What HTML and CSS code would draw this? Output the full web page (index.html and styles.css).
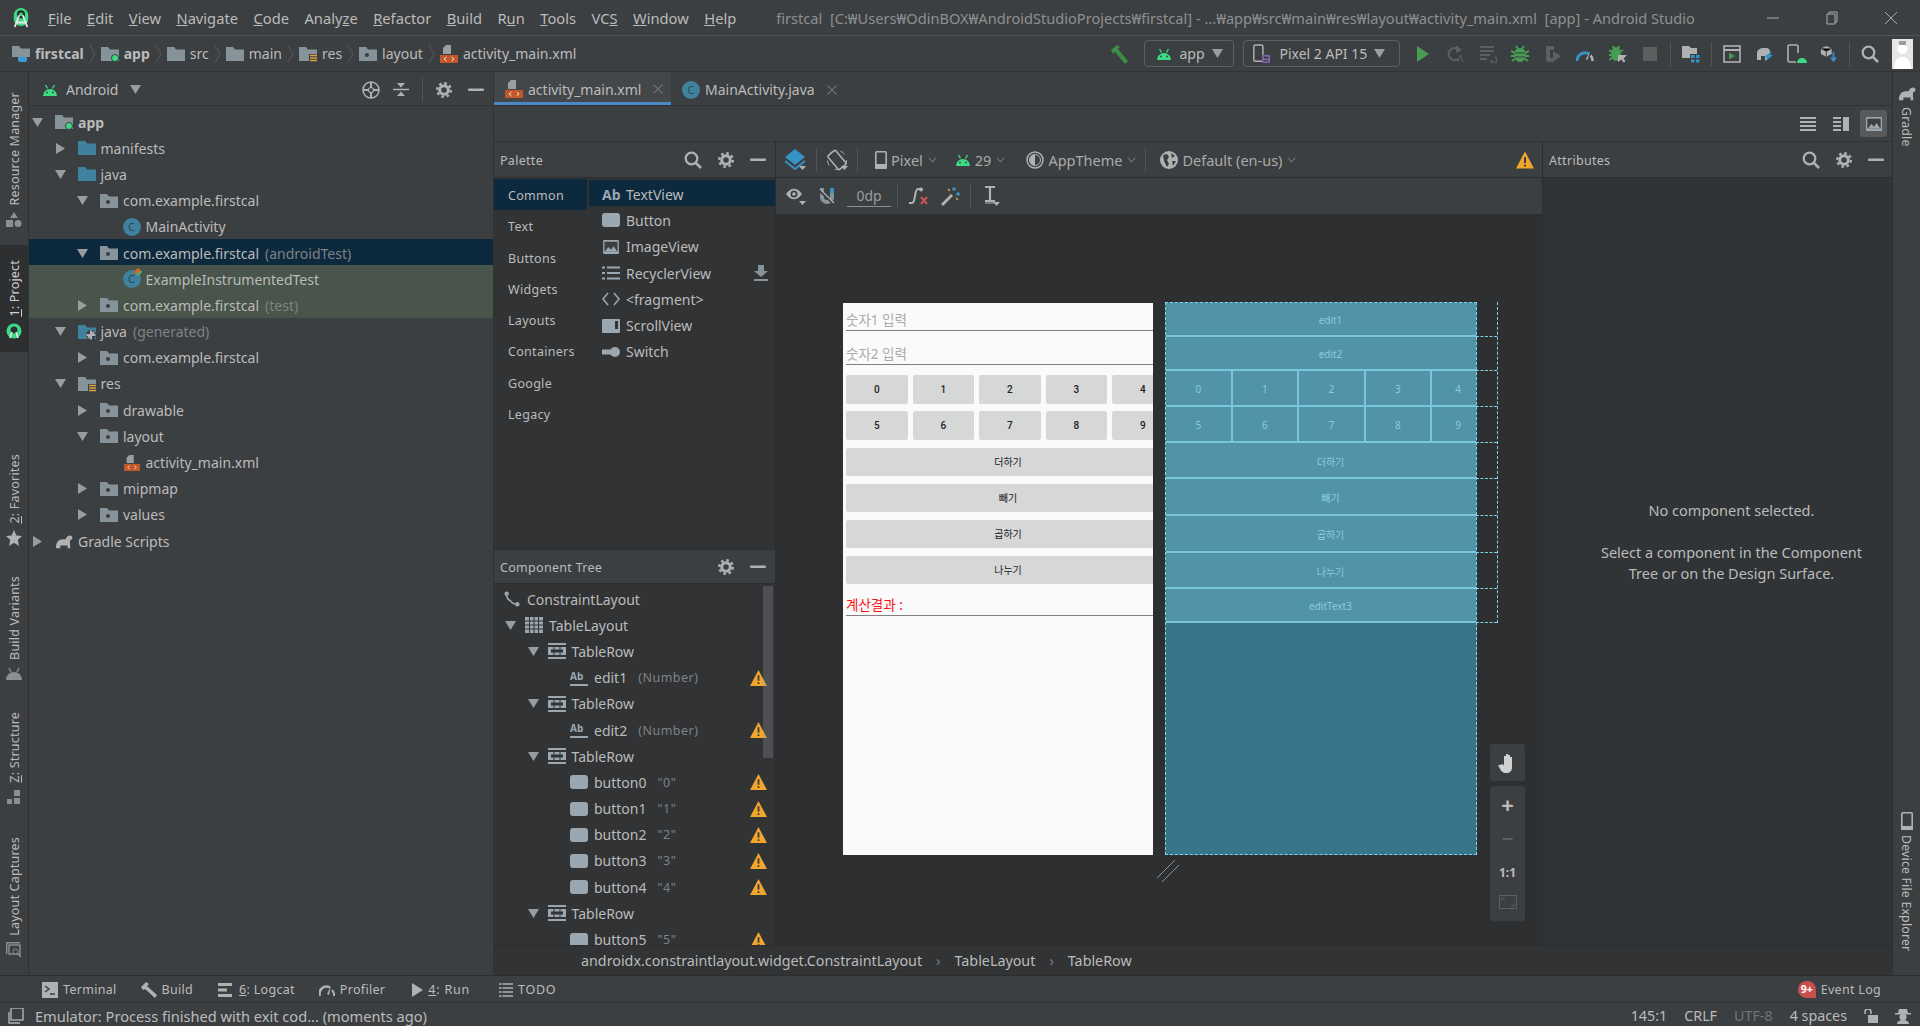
FILE: index.html
```html
<!DOCTYPE html>
<html lang="en">
<head>
    <meta charset="UTF-8">
    <meta name="viewport" content="width=device-width, initial-scale=1.0">
    <title>activity_main.xml - Android Studio</title>
    <link rel="stylesheet" href="styles.css">
</head>
<body>
    <svg class="sprite" xmlns="http://www.w3.org/2000/svg">
        <symbol id="i-logo" viewBox="0 0 20 24"><path d="M10 1a8 8 0 0 1 8 8v4a8 8 0 0 1-16 0V9a8 8 0 0 1 8-8z" fill="#3ddc84"/><circle cx="10" cy="8" r="4.5" fill="#2b2d2f"/><circle cx="10" cy="8" r="2" fill="#3ddc84"/><path d="M8 9 3 22M12 9l5 13M4 17h12" stroke="#e8e8e8" stroke-width="2" fill="none"/></symbol>
        <symbol id="i-folder" viewBox="0 0 18 16"><path d="M0 1h7l2 2.500h9V15H0z" fill="#87939a"/></symbol>
        <symbol id="i-pkg" viewBox="0 0 18 16"><path d="M0 1h7l2 2.500h9V15H0z" fill="#87939a"/><circle cx="8" cy="9" r="2" fill="#3c3f41"/></symbol>
        <symbol id="i-src" viewBox="0 0 18 16"><path d="M0 1h7l2 2.500h9V15H0z" fill="#40829e"/></symbol>
        <symbol id="i-gen" viewBox="0 0 18 16"><path d="M0 1h7l2 2.500h9V15H0z" fill="#40829e"/><circle cx="13" cy="11" r="5" fill="#3c3f41"/><path d="M13 11V6.500M13 11l4.500 0M13 11v4.500M13 11H8.500M13 11l3-3M13 11l-3 3" stroke="#afb1b3" stroke-width="2"/></symbol>
        <symbol id="i-module" viewBox="0 0 18 16"><path d="M0 1h7l2 2.500h9V15H0z" fill="#87939a"/><circle cx="14" cy="12" r="3.500" fill="#3ddc84" stroke="#3c3f41"/></symbol>
        <symbol id="i-project" viewBox="0 0 18 18"><path d="M0 1h7l2 2.500h9V12H0z" fill="#87939a"/><path d="M6 12h9v3a2 2 0 0 1-2 2H8a2 2 0 0 1-2-2z" fill="#3b9ad9"/></symbol>
        <symbol id="i-res" viewBox="0 0 18 16"><path d="M0 1h7l2 2.500h9V15H0z" fill="#87939a"/><rect x="10" y="8" width="8" height="8" fill="#3c3f41"/><path d="M11 9.500h7M11 12h7M11 14.500h7" stroke="#d9a343" stroke-width="1.500"/></symbol>
        <symbol id="i-xml" viewBox="0 0 18 18"><path d="M6 0h5v9H3V3z" fill="#9a9ea1"/><rect x="0" y="10" width="18" height="8" fill="#c2582a"/><path d="M6.500 12 4 14l2.500 2M11.500 12l2.500 2-2.500 2" stroke="#f0d8c8" fill="none"/></symbol>
        <symbol id="i-android" viewBox="0 0 16 12"><path d="M1 12a7 7 0 0 1 14 0z" fill="#3ddc84"/><path d="M3.500 1l2 3.500M12.500 1l-2 3.500" stroke="#3ddc84" stroke-width="1.300"/><circle cx="5" cy="8.500" r=".9" fill="#3c3f41"/><circle cx="11" cy="8.500" r=".9" fill="#3c3f41"/></symbol>
        <symbol id="i-down" viewBox="0 0 11 11"><path d="M0 1h11L5.500 10z" fill="#9a9da0"/></symbol>
        <symbol id="i-right" viewBox="0 0 11 11"><path d="M1 0l9 5.500L1 11z" fill="#9a9da0"/></symbol>
        <symbol id="i-chev" viewBox="0 0 10 8"><path d="M1 1.500 5 6l4-4.500" stroke="#7c7f82" stroke-width="1.200" fill="none"/></symbol>
        <symbol id="i-crumb" viewBox="0 0 8 22"><path d="M1 1l6 10-6 10" stroke="#5a5d5f" fill="none"/></symbol>
        <symbol id="i-gear" viewBox="0 0 16 16"><circle cx="8" cy="8" r="4.300" fill="none" stroke="#afb1b3" stroke-width="3"/><circle cx="8" cy="8" r="6.800" fill="none" stroke="#afb1b3" stroke-width="2.400" stroke-dasharray="2.700 2.640"/></symbol>
        <symbol id="i-minus" viewBox="0 0 16 16"><rect x="0" y="6.500" width="16" height="2.500" rx="1" fill="#afb1b3"/></symbol>
        <symbol id="i-search" viewBox="0 0 18 18"><circle cx="7.500" cy="7.500" r="5.800" fill="none" stroke="#afb1b3" stroke-width="2.200"/><path d="M11.500 11.500 17 17" stroke="#afb1b3" stroke-width="2.500"/></symbol>
        <symbol id="i-locate" viewBox="0 0 18 18"><circle cx="9" cy="9" r="8" fill="none" stroke="#afb1b3" stroke-width="1.500"/><circle cx="9" cy="9" r="2.500" fill="none" stroke="#afb1b3" stroke-width="1.200"/><path d="M9 1v5M9 12v5M1 9h5M12 9h5" stroke="#afb1b3" stroke-width="2"/></symbol>
        <symbol id="i-collapse" viewBox="0 0 16 16"><path d="M0 7.500h16" stroke="#afb1b3" stroke-width="1.500"/><path d="M4 1h8L8 5.500zM4 14h8l-4-4.500z" fill="#afb1b3"/></symbol>
        <symbol id="i-close" viewBox="0 0 10 10"><path d="M.5.500l9 9M9.500.500l-9 9" stroke="#6e7174" stroke-width="1.100"/></symbol>
        <symbol id="i-hammer" viewBox="0 0 20 20"><path d="M2 6 8 1l3 2-2 2 10 12-3 3L6 8 4 10z" fill="#3d8c46"/></symbol>
        <symbol id="i-device" viewBox="0 0 20 22"><rect x="1" y="1" width="10" height="18" rx="1.500" fill="none" stroke="#afb1b3" stroke-width="1.600"/><rect x="10" y="12" width="9" height="9" fill="#3c3f41"/><rect x="11" y="13" width="7" height="7" fill="none" stroke="#8a6db5" stroke-width="1.500"/><path d="M11 17h7" stroke="#8a6db5" stroke-width="1.500"/></symbol>
        <symbol id="i-run" viewBox="0 0 16 16"><path d="M2 0l12 8-12 8z" fill="#499c54"/></symbol>
        <symbol id="i-rerun" viewBox="0 0 18 18"><path d="M13 5a6 6 0 1 0-1 9" fill="none" stroke="#5e6060" stroke-width="2"/><path d="M10 0l6 5-6 3z" fill="#5e6060"/><path d="M12 17l2.500-7 2.500 7" fill="none" stroke="#5e6060"/></symbol>
        <symbol id="i-apply" viewBox="0 0 18 18"><path d="M1 2h14M1 6h14M1 10h10M1 14h7" stroke="#5e6060" stroke-width="2.200"/><path d="M16 12a3 3 0 1 1-4 3" fill="none" stroke="#5e6060" stroke-width="1.400"/></symbol>
        <symbol id="i-bug" viewBox="0 0 18 18"><ellipse cx="9" cy="10" rx="6" ry="7" fill="#499c54"/><path d="M5 1l2 3M13 1l-2 3M0 6l4 2M18 6l-4 2M0 11h4M18 11h-4M1 16l3-2M17 16l-3-2" stroke="#499c54" stroke-width="2"/><path d="M4 8h10M4 12h10" stroke="#3c3f41"/></symbol>
        <symbol id="i-attach" viewBox="0 0 18 18"><path d="M2 1h8v4H6v8h4v4H4l-2-2z" fill="#5e6060"/><path d="M9 6l8 5-8 6z" fill="#5e6060"/></symbol>
        <symbol id="i-profiler" viewBox="0 0 18 16"><path d="M1 15a8 8 0 0 1 12-7" fill="none" stroke="#3592c4" stroke-width="3"/><path d="M14 5l-4 8 1.500 1z" fill="#afb1b3"/><path d="M14.500 9.500a7 7 0 0 1 2 5.500" fill="none" stroke="#afb1b3" stroke-width="2.500"/></symbol>
        <symbol id="i-bug-attach" viewBox="0 0 18 18"><ellipse cx="7" cy="9" rx="5" ry="7" fill="#499c54"/><path d="M0 5l3 2M0 10h3M0 15l3-2M14 5l-3 2M4 1l1 3M10 1L9 4" stroke="#499c54" stroke-width="2"/><path d="M9 10h9l-3.500 3.500 2 3-2 1-2-3L9 17z" fill="#afb1b3"/></symbol>
        <symbol id="i-stop" viewBox="0 0 16 16"><rect x="1" y="1" width="14" height="14" fill="#5e6060"/></symbol>
        <symbol id="i-struct" viewBox="0 0 18 18"><path d="M0 1h7l2 2h6v10H0z" fill="#afb1b3"/><rect x="8" y="9" width="10" height="9" fill="#3c3f41"/><path d="M9 10h3.500v3H9zM14 10h3.500v3H14zM9 14.500h3.500v3H9zM14 14.500h3.500v3H14z" fill="#3592c4"/></symbol>
        <symbol id="i-panel" viewBox="0 0 18 18"><rect x="1" y="1" width="16" height="16" fill="none" stroke="#afb1b3" stroke-width="1.600"/><path d="M1 5h16" stroke="#afb1b3" stroke-width="2"/><path d="M6 7.500l6 3.500-6 3.500z" fill="#499c54"/></symbol>
        <symbol id="i-sync" viewBox="0 0 20 18"><path d="M3 15V8c0-3 3-5 7-5h2c3 0 4 2 4 4v3h-3v5h-2v-4H7v4z" fill="#afb1b3"/><path d="M10 12l8-6-2 4h3l-8 7 2-5z" fill="#3592c4"/></symbol>
        <symbol id="i-avd" viewBox="0 0 20 20"><rect x="1" y="1" width="10" height="17" rx="1.500" fill="none" stroke="#afb1b3" stroke-width="1.600"/><rect x="9" y="9" width="11" height="11" fill="#3c3f41"/><path d="M10 19a5 5 0 0 1 10 0z" fill="#3ddc84"/></symbol>
        <symbol id="i-sdk" viewBox="0 0 18 20"><path d="M6 1l6 3v6l-6 3-6-3V4z" fill="#afb1b3"/><path d="M6 7v6M0 4l6 3 6-3" stroke="#3c3f41"/><path d="M14 8v9" stroke="#3592c4" stroke-width="2"/><path d="M10 14h8l-4 5z" fill="#3592c4"/></symbol>
        <symbol id="i-avatar" viewBox="0 0 21 30"><rect width="21" height="30" fill="#e6e6e6"/><circle cx="10.500" cy="10" r="5" fill="#fff"/><path d="M2 30c0-9 4-12 8.500-12S19 21 19 30z" fill="#fff"/><path d="M7 2h7v4H7z" fill="#9c9c9c"/></symbol>
        <symbol id="i-list" viewBox="0 0 16 16"><path d="M0 2h16M0 6h16M0 10h16M0 14h16" stroke="#afb1b3" stroke-width="2"/></symbol>
        <symbol id="i-split" viewBox="0 0 16 16"><path d="M0 2h8M0 6h8M0 10h8M0 14h8" stroke="#afb1b3" stroke-width="2"/><rect x="10" y="1" width="6" height="14" fill="#afb1b3"/></symbol>
        <symbol id="i-image" viewBox="0 0 18 16"><rect width="18" height="16" rx="1" fill="#9aa7b0"/><rect x="1.500" y="2" width="15" height="11" fill="#3c3f41"/><path d="M2 13l4-5 3 3 3-4 4 6z" fill="#9aa7b0"/></symbol>
        <symbol id="i-layers" viewBox="0 0 22 22"><path d="M11 0l10 8-10 8L1 8z" fill="#3592c4"/><path d="M1 12l10 8 10-8" fill="none" stroke="#3592c4" stroke-width="2"/><path d="M15 17h7l-3.500 4z" fill="#afb1b3"/></symbol>
        <symbol id="i-rotate" viewBox="0 0 22 22"><rect x="6" y="2" width="10" height="18" rx="1.500" transform="rotate(-40 11 11)" fill="none" stroke="#afb1b3" stroke-width="1.500"/><circle cx="11" cy="11" r="9.500" fill="none" stroke="#afb1b3" stroke-dasharray="5 7"/><path d="M15 17h7l-3.500 4z" fill="#afb1b3"/></symbol>
        <symbol id="i-phone" viewBox="0 0 12 18"><rect x=".8" y=".8" width="10.400" height="16.400" rx="1" fill="none" stroke="#afb1b3" stroke-width="1.600"/><rect x="0" y="13" width="12" height="5" rx="1" fill="#afb1b3"/></symbol>
        <symbol id="i-theme" viewBox="0 0 18 18"><circle cx="9" cy="9" r="8" fill="none" stroke="#afb1b3" stroke-width="1.500"/><path d="M9 3.500a5.500 5.500 0 0 0 0 11z" fill="#afb1b3"/><circle cx="9" cy="9" r="5.500" fill="none" stroke="#afb1b3"/></symbol>
        <symbol id="i-globe" viewBox="0 0 18 18"><circle cx="9" cy="9" r="9" fill="#afb1b3"/><path d="M3 4l4-1 2 3-2 3 2 4-2 3-3-6zM11 2l4 3-3 2zM12 10h4l-3 5z" fill="#3c3f41"/></symbol>
        <symbol id="i-warn" viewBox="0 0 18 17"><path d="M9 0l9 17H0z" fill="#f2a62c"/><path d="M9 5.500v6M9 13v2" stroke="#3c3f41" stroke-width="2"/></symbol>
        <symbol id="i-eye" viewBox="0 0 20 20"><path d="M0 8c5-7 11-7 16 0-5 7-11 7-16 0z" fill="#afb1b3"/><circle cx="8" cy="8" r="3.500" fill="#3c3f41"/><circle cx="8" cy="8" r="1.800" fill="#afb1b3"/><path d="M13 15h7l-3.500 4z" fill="#afb1b3"/></symbol>
        <symbol id="i-magnet" viewBox="0 0 18 18"><path d="M1 1v9a7 7 0 0 0 14 0V1h-4v9a3 3 0 0 1-6 0V1z" fill="#87939a"/><rect x="11" y="1" width="4" height="5" fill="#3592c4"/><path d="M0 3l15 14" stroke="#3c3f41" stroke-width="2.500"/><path d="M1 2l14 14" stroke="#afb1b3" stroke-width="1.200"/></symbol>
        <symbol id="i-noconstraint" viewBox="0 0 20 18"><path d="M1 16h3c4 0 2-14 6-14h2" fill="none" stroke="#afb1b3" stroke-width="2"/><circle cx="13" cy="2.500" r="2" fill="#afb1b3"/><path d="M13 10l6 7M19 10l-6 7" stroke="#c75450" stroke-width="2"/></symbol>
        <symbol id="i-wand" viewBox="0 0 20 20"><path d="M1 18 11 8l2 2L3 20z" fill="#afb1b3"/><path d="M14 1v4M12 3h4M18 6v4M16 8h4" stroke="#3592c4" stroke-width="1.400"/><path d="M8 3l2 2M16 12l2 2" stroke="#d9a343" stroke-width="1.400"/></symbol>
        <symbol id="i-baseline" viewBox="0 0 18 20"><path d="M3 1h10M3 15h10M8 1v14" stroke="#afb1b3" stroke-width="2.200"/><path d="M3 17h9" stroke="#afb1b3"/><path d="M11 16h7l-3.500 4z" fill="#afb1b3"/></symbol>
        <symbol id="i-hand" viewBox="0 0 18 20"><path d="M1 12l3-1 1 2V3h2v7V1h2v9-8h2v8V4h2v10c0 4-2 6-6 6-4 0-5-2-8-8z" fill="#d0d0d0"/></symbol>
        <symbol id="i-fit" viewBox="0 0 18 14"><rect x=".5" y=".5" width="17" height="13" fill="none" stroke="#5e6062"/><path d="M3 6V3h3M15 8v3h-3" fill="none" stroke="#5e6062"/></symbol>
        <symbol id="i-button" viewBox="0 0 18 14"><rect width="18" height="14" rx="3" fill="#9aa7b0"/></symbol>
        <symbol id="i-rlist" viewBox="0 0 18 14"><path d="M0 1.500h3M5 1.500h13M0 7h3M5 7h13M0 12.500h3M5 12.500h13" stroke="#9aa7b0" stroke-width="2"/></symbol>
        <symbol id="i-code" viewBox="0 0 18 14"><path d="M6 1 1 7l5 6M12 1l5 6-5 6" fill="none" stroke="#9aa7b0" stroke-width="1.600"/></symbol>
        <symbol id="i-scroll" viewBox="0 0 18 14"><rect width="18" height="14" rx="1" fill="#9aa7b0"/><rect x="13" y="2" width="3" height="8" fill="#313335"/></symbol>
        <symbol id="i-switch" viewBox="0 0 18 12"><rect x="0" y="3.500" width="12" height="5" fill="#9aa7b0"/><circle cx="13" cy="6" r="5" fill="#9aa7b0"/></symbol>
        <symbol id="i-download" viewBox="0 0 14 16"><path d="M4 0h6v6h4l-7 6-7-6h4z" fill="#87939a"/><rect y="14" width="14" height="2" fill="#87939a"/></symbol>
        <symbol id="i-constraint" viewBox="0 0 18 18"><circle cx="3" cy="3" r="2.500" fill="#9aa7b0"/><circle cx="15" cy="15" r="2.500" fill="#9aa7b0"/><path d="M3 3c0 8 3 6 5 9s4 3 7 3" fill="none" stroke="#9aa7b0" stroke-width="1.800"/></symbol>
        <symbol id="i-table" viewBox="0 0 18 16"><path d="M0 0h18v16H0z" fill="#9aa7b0"/><path d="M0 4h18M0 8h18M0 12h18M4.500 0v16M9 0v16M13.500 0v16" stroke="#313335"/></symbol>
        <symbol id="i-tablerow" viewBox="0 0 18 16"><path d="M0 0h18v2H0zM0 14h18v2H0z" fill="#9aa7b0"/><rect x="0" y="4" width="18" height="8" fill="#9aa7b0"/><path d="M6 4v8M12 4v8" stroke="#313335"/><rect x="3" y="6.500" width="12" height="3" fill="#313335"/></symbol>
        <symbol id="i-gradle" viewBox="0 0 20 16"><path d="M1 16c0-7 3-10 8-10h3c1-4 5-5 7-3 1 2 0 4-2 4-1 2 0 6 0 9h-3v-3H6v3z" fill="#afb1b3"/></symbol>
        <symbol id="i-resmgr" viewBox="0 0 16 16"><path d="M8 0l4 6H4zM0 8h7v7H0z" fill="#8c8f92"/><circle cx="12" cy="11.500" r="3.500" fill="#8c8f92"/></symbol>
        <symbol id="i-droid" viewBox="0 0 16 16"><circle cx="8" cy="8" r="7.500" fill="#3ddc84"/><circle cx="8" cy="7" r="3.500" fill="#2d2f31"/><path d="M6 9l-2 6M10 9l2 6" stroke="#e8e8e8" stroke-width="1.500"/></symbol>
        <symbol id="i-star" viewBox="0 0 16 16"><path d="M8 0l2.400 5.500 5.600.500-4.200 3.800L13 16 8 12.800 3 16l1.200-6.200L0 6l5.600-.500z" fill="#afb1b3"/></symbol>
        <symbol id="i-variants" viewBox="0 0 16 14"><path d="M0 13a8 8 0 0 1 16 0z" fill="#8c8f92"/><path d="M3 1l2 4M13 1l-2 4" stroke="#8c8f92" stroke-width="1.400"/></symbol>
        <symbol id="i-structure" viewBox="0 0 16 16"><path d="M8 1h6v6H8zM1 10h5v5H1zM8 9h6v6H8z" fill="#8c8f92"/></symbol>
        <symbol id="i-capture" viewBox="0 0 16 16"><path d="M.7 12V.7H14" fill="none" stroke="#8c8f92" stroke-width="1.400"/><rect x="3" y="3" width="11" height="9" fill="#3c3f41" stroke="#8c8f92" stroke-width="1.400"/><circle cx="9.500" cy="9.500" r="2.500" fill="#3c3f41" stroke="#8c8f92"/><path d="M11.500 11.500l3.500 3.500" stroke="#8c8f92" stroke-width="1.500"/></symbol>
        <symbol id="i-terminal" viewBox="0 0 16 16"><rect width="16" height="16" fill="#afb1b3"/><path d="M3 4l4 3-4 3" fill="none" stroke="#3c3f41" stroke-width="1.500"/><path d="M8 12h5" stroke="#3c3f41" stroke-width="1.500"/></symbol>
        <symbol id="i-build" viewBox="0 0 16 16"><path d="M0 5l5-5 3 2-2 2 10 9-2 3L4 7 2 8z" fill="#afb1b3"/></symbol>
        <symbol id="i-logcat" viewBox="0 0 16 14"><path d="M0 0h14v3H0zM0 5.500h9v3H0zM0 11h14v3H0z" fill="#afb1b3"/></symbol>
        <symbol id="i-gauge" viewBox="0 0 16 14"><path d="M1 13A7 7 0 0 1 11 4.500" fill="none" stroke="#afb1b3" stroke-width="2.500"/><path d="M12 3L8 11l2 1z" fill="#afb1b3"/><path d="M13 7a7 7 0 0 1 2 6" fill="none" stroke="#afb1b3" stroke-width="2"/></symbol>
        <symbol id="i-play" viewBox="0 0 11 14"><path d="M0 0l11 7-11 7z" fill="#afb1b3"/></symbol>
        <symbol id="i-todo" viewBox="0 0 14 14"><path d="M0 1h14M0 5h14M0 9h14M0 13h14" stroke="#afb1b3" stroke-width="1.600"/><path d="M3 0v14" stroke="#3c3f41"/></symbol>
        <symbol id="i-copies" viewBox="0 0 16 16"><rect x="3" y="0" width="12" height="12" fill="none" stroke="#afb1b3" stroke-width="1.400"/><path d="M1 4v11h11" fill="none" stroke="#afb1b3" stroke-width="1.400"/></symbol>
        <symbol id="i-lock" viewBox="0 0 14 14"><path d="M1 5V3a3 3 0 0 1 6 0v2" fill="none" stroke="#afb1b3" stroke-width="1.600"/><rect x="4" y="6" width="10" height="8" fill="#afb1b3"/></symbol>
        <symbol id="i-hector" viewBox="0 0 16 16"><path d="M4 1h8l1 4h3v1.500H0V5h3z" fill="#afb1b3"/><circle cx="8" cy="9" r="3.500" fill="#afb1b3"/><path d="M2 16c0-3 3-4 6-4s6 1 6 4z" fill="#afb1b3"/></symbol>
        <symbol id="i-devphone" viewBox="0 0 12 18"><rect x=".8" y=".8" width="10.400" height="16.400" rx="1" fill="none" stroke="#afb1b3" stroke-width="1.600"/><rect x="0" y="14" width="12" height="4" fill="#afb1b3"/></symbol>
    </svg>

    <header class="titlebar">
        <svg class="logo"><use href="#i-logo"/></svg>
        <nav class="menu">
            <span><u>F</u>ile</span>
            <span><u>E</u>dit</span>
            <span><u>V</u>iew</span>
            <span><u>N</u>avigate</span>
            <span><u>C</u>ode</span>
            <span>Analy<u>z</u>e</span>
            <span><u>R</u>efactor</span>
            <span><u>B</u>uild</span>
            <span>R<u>u</u>n</span>
            <span><u>T</u>ools</span>
            <span>VC<u>S</u></span>
            <span><u>W</u>indow</span>
            <span><u>H</u>elp</span>
        </nav>
        <div class="window-title">firstcal&nbsp; [C:₩Users₩OdinBOX₩AndroidStudioProjects₩firstcal] - ...₩app₩src₩main₩res₩layout₩activity_main.xml&nbsp; [app] - Android Studio</div>
        <div class="window-btns">
            <svg class="win-ic" viewBox="0 0 14 14"><path d="M1 7h12" stroke="#a9abad"/></svg>
            <svg class="win-ic" viewBox="0 0 14 14"><path d="M4 3V1h8v10h-2M2 3h8v10H2z" fill="none" stroke="#a9abad"/></svg>
            <svg class="win-ic" viewBox="0 0 14 14"><path d="M1 1l12 12M13 1 1 13" stroke="#a9abad"/></svg>
        </div>
    </header>

    <div class="navbar">
        <div class="crumbs">
            <svg class="ic-18"><use href="#i-project"/></svg><b>firstcal</b><svg class="crumb-sep"><use href="#i-crumb"/></svg>
            <svg class="ic-18"><use href="#i-module"/></svg><b>app</b><svg class="crumb-sep"><use href="#i-crumb"/></svg>
            <svg class="ic-18"><use href="#i-folder"/></svg><span>src</span><svg class="crumb-sep"><use href="#i-crumb"/></svg>
            <svg class="ic-18"><use href="#i-folder"/></svg><span>main</span><svg class="crumb-sep"><use href="#i-crumb"/></svg>
            <svg class="ic-18"><use href="#i-res"/></svg><span>res</span><svg class="crumb-sep"><use href="#i-crumb"/></svg>
            <svg class="ic-18"><use href="#i-pkg"/></svg><span>layout</span><svg class="crumb-sep"><use href="#i-crumb"/></svg>
            <svg class="ic-18"><use href="#i-xml"/></svg><span>activity_main.xml</span>
        </div>
        <div class="actions">
            <svg class="ic-20"><use href="#i-hammer"/></svg>
            <div class="combo combo-app"><svg class="ic-android"><use href="#i-android"/></svg><span>app</span><svg class="ic-11"><use href="#i-down"/></svg></div>
            <div class="combo combo-device"><svg class="ic-20"><use href="#i-device"/></svg><span>Pixel 2 API 15</span><svg class="ic-11"><use href="#i-down"/></svg></div>
            <div class="tool-icons">
                <span class="tb"><svg class="ic-16"><use href="#i-run"/></svg></span>
                <span class="tb"><svg class="ic-18"><use href="#i-rerun"/></svg></span>
                <span class="tb"><svg class="ic-18"><use href="#i-apply"/></svg></span>
                <span class="tb"><svg class="ic-18"><use href="#i-bug"/></svg></span>
                <span class="tb"><svg class="ic-18"><use href="#i-attach"/></svg></span>
                <span class="tb"><svg class="ic-18"><use href="#i-profiler"/></svg></span>
                <span class="tb"><svg class="ic-18"><use href="#i-bug-attach"/></svg></span>
                <span class="tb"><svg class="ic-16"><use href="#i-stop"/></svg></span>
                <i class="vsep"></i>
                <span class="tb"><svg class="ic-18"><use href="#i-struct"/></svg></span>
                <i class="vsep"></i>
                <span class="tb"><svg class="ic-18"><use href="#i-panel"/></svg></span>
                <span class="tb"><svg class="ic-20"><use href="#i-sync"/></svg></span>
                <span class="tb"><svg class="ic-20"><use href="#i-avd"/></svg></span>
                <span class="tb"><svg class="ic-18"><use href="#i-sdk"/></svg></span>
                <i class="vsep"></i>
                <span class="tb"><svg class="ic-18"><use href="#i-search"/></svg></span>
            </div>
            <svg class="avatar"><use href="#i-avatar"/></svg>
        </div>
    </div>

    <main class="workspace">
        <aside class="strip-left">
            <div class="strip-item item-res"><span class="vtext">Resource Manager</span><svg class="ic-16"><use href="#i-resmgr"/></svg></div>
            <div class="strip-item item-project"><span class="vtext"><u>1</u>: Project</span><svg class="ic-16"><use href="#i-droid"/></svg></div>
            <div class="strip-item item-fav"><span class="vtext"><u>2</u>: Favorites</span><svg class="ic-16"><use href="#i-star"/></svg></div>
            <div class="strip-item item-variants"><span class="vtext">Build Variants</span><svg class="ic-16"><use href="#i-variants"/></svg></div>
            <div class="strip-item item-struct"><span class="vtext"><u>Z</u>: Structure</span><svg class="ic-16"><use href="#i-structure"/></svg></div>
            <div class="strip-item item-captures"><span class="vtext">Layout Captures</span><svg class="ic-16"><use href="#i-capture"/></svg></div>
        </aside>

        <section class="project-panel">
            <div class="panel-head">
                <svg class="ic-android"><use href="#i-android"/></svg>
                <span class="head-title">Android</span>
                <svg class="ic-11"><use href="#i-down"/></svg>
                <div class="head-tools">
                    <svg class="ic-18"><use href="#i-locate"/></svg>
                    <svg class="ic-16"><use href="#i-collapse"/></svg>
                    <i class="vsep"></i>
                    <svg class="ic-16"><use href="#i-gear"/></svg>
                    <svg class="ic-16 head-min"><use href="#i-minus"/></svg>
                </div>
            </div>
            <div class="tree">
                <div class="node"><svg class="arrow"><use href="#i-down"/></svg><svg class="ic"><use href="#i-module"/></svg><b>app</b></div>
                <div class="node lv1"><svg class="arrow"><use href="#i-right"/></svg><svg class="ic"><use href="#i-src"/></svg>manifests</div>
                <div class="node lv1"><svg class="arrow"><use href="#i-down"/></svg><svg class="ic"><use href="#i-src"/></svg>java</div>
                <div class="node lv2"><svg class="arrow"><use href="#i-down"/></svg><svg class="ic"><use href="#i-pkg"/></svg>com.example.firstcal</div>
                <div class="node lv3"><span class="arrow"></span><span class="ic cls">C</span>MainActivity</div>
                <div class="node lv2 selected"><svg class="arrow"><use href="#i-down"/></svg><svg class="ic"><use href="#i-pkg"/></svg>com.example.firstcal<em>(androidTest)</em></div>
                <div class="node lv3 testrow"><span class="arrow"></span><span class="ic cls cls-test">C</span>ExampleInstrumentedTest</div>
                <div class="node lv2 testrow"><svg class="arrow"><use href="#i-right"/></svg><svg class="ic"><use href="#i-pkg"/></svg>com.example.firstcal<em>(test)</em></div>
                <div class="node lv1"><svg class="arrow"><use href="#i-down"/></svg><svg class="ic"><use href="#i-gen"/></svg>java<em>(generated)</em></div>
                <div class="node lv2"><svg class="arrow"><use href="#i-right"/></svg><svg class="ic"><use href="#i-pkg"/></svg>com.example.firstcal</div>
                <div class="node lv1"><svg class="arrow"><use href="#i-down"/></svg><svg class="ic"><use href="#i-res"/></svg>res</div>
                <div class="node lv2"><svg class="arrow"><use href="#i-right"/></svg><svg class="ic"><use href="#i-pkg"/></svg>drawable</div>
                <div class="node lv2"><svg class="arrow"><use href="#i-down"/></svg><svg class="ic"><use href="#i-pkg"/></svg>layout</div>
                <div class="node lv3"><span class="arrow"></span><svg class="ic"><use href="#i-xml"/></svg>activity_main.xml</div>
                <div class="node lv2"><svg class="arrow"><use href="#i-right"/></svg><svg class="ic"><use href="#i-pkg"/></svg>mipmap</div>
                <div class="node lv2"><svg class="arrow"><use href="#i-right"/></svg><svg class="ic"><use href="#i-pkg"/></svg>values</div>
                <div class="node"><svg class="arrow"><use href="#i-right"/></svg><svg class="ic"><use href="#i-gradle"/></svg>Gradle Scripts</div>
            </div>
        </section>

        <section class="editor">
            <div class="tabs">
                <div class="tab active"><svg class="ic-18"><use href="#i-xml"/></svg><span>activity_main.xml</span><svg class="ic-10"><use href="#i-close"/></svg></div>
                <div class="tab"><span class="cls">C</span><span>MainActivity.java</span><svg class="ic-10"><use href="#i-close"/></svg></div>
            </div>
            <div class="viewmodes">
                <span class="vm"><svg class="ic-16"><use href="#i-list"/></svg></span>
                <span class="vm"><svg class="ic-16"><use href="#i-split"/></svg></span>
                <span class="vm vm-on"><svg class="ic-16"><use href="#i-image"/></svg></span>
            </div>
            <div class="design">
                <div class="left-col">
                    <div class="palette">
                        <div class="sub-head">
                            <span>Palette</span>
                            <div class="sub-tools"><svg class="ic-18"><use href="#i-search"/></svg><svg class="ic-16"><use href="#i-gear"/></svg><svg class="ic-16"><use href="#i-minus"/></svg></div>
                        </div>
                        <div class="palette-body">
                            <ul class="cats">
                                <li class="on">Common</li>
                                <li>Text</li>
                                <li>Buttons</li>
                                <li>Widgets</li>
                                <li>Layouts</li>
                                <li>Containers</li>
                                <li>Google</li>
                                <li>Legacy</li>
                            </ul>
                            <ul class="widgets">
                                <li class="on"><b class="ab">Ab</b>TextView</li>
                                <li><svg class="w-ic"><use href="#i-button"/></svg>Button</li>
                                <li><svg class="w-ic"><use href="#i-image"/></svg>ImageView</li>
                                <li><svg class="w-ic"><use href="#i-rlist"/></svg>RecyclerView<svg class="dl"><use href="#i-download"/></svg></li>
                                <li><svg class="w-ic"><use href="#i-code"/></svg>&lt;fragment&gt;</li>
                                <li><svg class="w-ic"><use href="#i-scroll"/></svg>ScrollView</li>
                                <li><svg class="w-ic"><use href="#i-switch"/></svg>Switch</li>
                            </ul>
                        </div>
                    </div>
                    <div class="comp-tree">
                        <div class="sub-head">
                            <span>Component Tree</span>
                            <div class="sub-tools"><svg class="ic-16"><use href="#i-gear"/></svg><svg class="ic-16"><use href="#i-minus"/></svg></div>
                        </div>
                        <div class="comp-list">
                            <div class="cnode c-root"><svg class="c-ic"><use href="#i-constraint"/></svg>ConstraintLayout</div>
                            <div class="cnode"><svg class="c-ar"><use href="#i-down"/></svg><svg class="c-ic"><use href="#i-table"/></svg>TableLayout</div>
                            <div class="cnode c1"><svg class="c-ar"><use href="#i-down"/></svg><svg class="c-ic"><use href="#i-tablerow"/></svg>TableRow</div>
                            <div class="cnode c2"><span class="c-ar"></span><span class="c-ic edit-ic">Ab</span>edit1<em>(Number)</em><svg class="warn"><use href="#i-warn"/></svg></div>
                            <div class="cnode c1"><svg class="c-ar"><use href="#i-down"/></svg><svg class="c-ic"><use href="#i-tablerow"/></svg>TableRow</div>
                            <div class="cnode c2"><span class="c-ar"></span><span class="c-ic edit-ic">Ab</span>edit2<em>(Number)</em><svg class="warn"><use href="#i-warn"/></svg></div>
                            <div class="cnode c1"><svg class="c-ar"><use href="#i-down"/></svg><svg class="c-ic"><use href="#i-tablerow"/></svg>TableRow</div>
                            <div class="cnode c2"><span class="c-ar"></span><svg class="c-ic"><use href="#i-button"/></svg>button0<em>"0"</em><svg class="warn"><use href="#i-warn"/></svg></div>
                            <div class="cnode c2"><span class="c-ar"></span><svg class="c-ic"><use href="#i-button"/></svg>button1<em>"1"</em><svg class="warn"><use href="#i-warn"/></svg></div>
                            <div class="cnode c2"><span class="c-ar"></span><svg class="c-ic"><use href="#i-button"/></svg>button2<em>"2"</em><svg class="warn"><use href="#i-warn"/></svg></div>
                            <div class="cnode c2"><span class="c-ar"></span><svg class="c-ic"><use href="#i-button"/></svg>button3<em>"3"</em><svg class="warn"><use href="#i-warn"/></svg></div>
                            <div class="cnode c2"><span class="c-ar"></span><svg class="c-ic"><use href="#i-button"/></svg>button4<em>"4"</em><svg class="warn"><use href="#i-warn"/></svg></div>
                            <div class="cnode c1"><svg class="c-ar"><use href="#i-down"/></svg><svg class="c-ic"><use href="#i-tablerow"/></svg>TableRow</div>
                            <div class="cnode c2"><span class="c-ar"></span><svg class="c-ic"><use href="#i-button"/></svg>button5<em>"5"</em><svg class="warn"><use href="#i-warn"/></svg></div>
                        </div>
                        <div class="scrollbar"></div>
                    </div>
                </div>

                <div class="center-col">
                    <div class="dt-bar">
                        <svg class="ic-22 m-a"><use href="#i-layers"/></svg>
                        <i class="vsep"></i>
                        <svg class="ic-22"><use href="#i-rotate"/></svg>
                        <i class="vsep"></i>
                        <svg class="ic-phone m-b"><use href="#i-phone"/></svg>
                        <span class="dt-label">Pixel</span><svg class="ic-chev"><use href="#i-chev"/></svg>
                        <svg class="ic-android m-c"><use href="#i-android"/></svg>
                        <span class="dt-label">29</span><svg class="ic-chev"><use href="#i-chev"/></svg>
                        <svg class="ic-18 m-t"><use href="#i-theme"/></svg>
                        <span class="dt-label">AppTheme</span><svg class="ic-chev"><use href="#i-chev"/></svg>
                        <i class="vsep"></i>
                        <svg class="ic-18 m-d"><use href="#i-globe"/></svg>
                        <span class="dt-label">Default (en-us)</span><svg class="ic-chev"><use href="#i-chev"/></svg>
                        <svg class="ic-18 warn-top"><use href="#i-warn"/></svg>
                    </div>
                    <div class="dt-bar bar2">
                        <svg class="ic-20 m-a"><use href="#i-eye"/></svg>
                        <svg class="ic-18"><use href="#i-magnet"/></svg>
                        <span class="zero-dp">0dp</span>
                        <i class="vsep"></i>
                        <svg class="ic-20"><use href="#i-noconstraint"/></svg>
                        <svg class="ic-20"><use href="#i-wand"/></svg>
                        <i class="vsep"></i>
                        <svg class="ic-20"><use href="#i-baseline"/></svg>
                    </div>
                    <div class="surface">
                        <div class="phone">
                            <div class="edit e1">숫자1 입력</div>
                            <div class="edit e2">숫자2 입력</div>
                            <div class="btn-row r1"><button>0</button><button>1</button><button>2</button><button>3</button><button>4</button></div>
                            <div class="btn-row r2"><button>5</button><button>6</button><button>7</button><button>8</button><button>9</button></div>
                            <button class="wide w1">더하기</button>
                            <button class="wide">빼기</button>
                            <button class="wide">곱하기</button>
                            <button class="wide">나누기</button>
                            <div class="edit result">계산결과 :</div>
                        </div>
                        <div class="blueprint">
                            <div class="bp-row b34">edit1</div>
                            <div class="bp-row b34">edit2</div>
                            <div class="bp-row b36 cells"><span>0</span><span>1</span><span>2</span><span>3</span><span>4</span></div>
                            <div class="bp-row b36 cells"><span>5</span><span>6</span><span>7</span><span>8</span><span>9</span></div>
                            <div class="bp-row b36">더하기</div>
                            <div class="bp-row b37">빼기</div>
                            <div class="bp-row b37">곱하기</div>
                            <div class="bp-row b36">나누기</div>
                            <div class="bp-row b34">editText3</div>
                            <div class="bp-guide"></div>
                        </div>
                        <svg class="resize" viewBox="0 0 22 22"><path d="M0 18 18 0M5 22 22 5" stroke="#8c8f92"/></svg>
                        <div class="zoom-box hand"><svg class="ic-20"><use href="#i-hand"/></svg></div>
                        <div class="zoom-box zooms">
                            <span class="plus">+</span>
                            <span class="minus">−</span>
                            <b>1:1</b>
                            <svg class="ic-fit"><use href="#i-fit"/></svg>
                        </div>
                    </div>
                </div>

                <div class="attrs">
                    <div class="sub-head">
                        <span>Attributes</span>
                        <div class="sub-tools"><svg class="ic-18"><use href="#i-search"/></svg><svg class="ic-16"><use href="#i-gear"/></svg><svg class="ic-16"><use href="#i-minus"/></svg></div>
                    </div>
                    <div class="attrs-msg">
                        <p>No component selected.</p>
                        <p>Select a component in the Component<br>Tree or on the Design Surface.</p>
                    </div>
                </div>
            </div>
            <div class="path-bar">
                <span>androidx.constraintlayout.widget.ConstraintLayout</span><i class="path-sep">›</i><span>TableLayout</span><i class="path-sep">›</i><span>TableRow</span>
            </div>
        </section>

        <aside class="strip-right">
            <div class="r-item r-gradle"><svg class="ic-18"><use href="#i-gradle"/></svg><span class="vtext-r">Gradle</span></div>
            <div class="r-item r-device"><svg class="ic-phone"><use href="#i-devphone"/></svg><span class="vtext-r">Device File Explorer</span></div>
        </aside>
    </main>

    <div class="toolbar-bottom">
        <span class="bt t-term"><svg class="ic-16"><use href="#i-terminal"/></svg>Terminal</span>
        <span class="bt t-build"><svg class="ic-16"><use href="#i-build"/></svg>Build</span>
        <span class="bt t-log"><svg class="ic-16"><use href="#i-logcat"/></svg><span><u>6</u>: Logcat</span></span>
        <span class="bt t-prof"><svg class="ic-16"><use href="#i-gauge"/></svg>Profiler</span>
        <span class="bt t-run"><svg class="ic-play"><use href="#i-play"/></svg><span><u>4</u>: Run</span></span>
        <span class="bt t-todo"><svg class="ic-14"><use href="#i-todo"/></svg>TODO</span>
        <span class="bt event-log"><b class="badge">9+</b>Event Log</span>
    </div>

    <footer class="status">
        <svg class="ic-16 st-copies"><use href="#i-copies"/></svg>
        <span>Emulator: Process finished with exit cod... (moments ago)</span>
        <div class="status-right">
            <span>145:1</span>
            <span>CRLF</span>
            <span class="dim">UTF-8</span>
            <span>4 spaces</span>
            <svg class="ic-14"><use href="#i-lock"/></svg>
            <svg class="ic-16"><use href="#i-hector"/></svg>
        </div>
    </footer>
</body>
</html>
```

FILE: styles.css
```css
* {
    box-sizing: border-box;
}

html, body {
    height: 100%;
}

body {
    margin: 0;
    width: 1920px;
    height: 1026px;
    overflow: hidden;
    display: flex;
    flex-direction: column;
    background-color: #3c3f41;
    color: #bbbbbb;
    font-family: "Noto Sans", "Noto Sans CJK KR", sans-serif;
    font-size: 14px;
}

svg {
    flex: none;
    display: block;
}

ul {
    list-style: none;
    margin: 0;
    padding: 0;
}

.sprite {
    width: 0;
    height: 0;
    position: absolute;
}

.ic-10 { width: 10px; height: 10px; }
.ic-11 { width: 11px; height: 11px; }
.ic-14 { width: 14px; height: 14px; }
.ic-16 { width: 16px; height: 16px; }
.ic-18 { width: 18px; height: 18px; }
.ic-20 { width: 20px; height: 20px; }
.ic-22 { width: 22px; height: 22px; }
.ic-android { width: 16px; height: 12px; }
.ic-phone { width: 12px; height: 18px; }
.ic-chev { width: 9px; height: 8px; }
.ic-play { width: 11px; height: 14px; }
.ic-fit { width: 18px; height: 14px; }

.vsep {
    flex: none;
    display: block;
    width: 1px;
    height: 24px;
    background-color: #515456;
}

/* class icon, a round badge with a letter */
.cls {
    flex: none;
    position: relative;
    width: 18px;
    height: 18px;
    border-radius: 50%;
    background-color: #40829e;
    color: #24485a;
    font-size: 11px;
    line-height: 18px;
    text-align: center;
}

.cls-test::after {
    content: "";
    position: absolute;
    top: -1px;
    right: 0;
    width: 6px;
    height: 6px;
    background: linear-gradient(90deg, #d9622b 50%, #59a869 50%);
    transform: rotate(45deg);
}

/* title bar */
.titlebar {
    flex: none;
    height: 36px;
    display: flex;
    align-items: center;
    border-bottom: 1px solid #515456;
    padding-left: 12px;
    color: #bbbbbb;
}

.logo {
    width: 18px;
    height: 22px;
}

.menu {
    display: flex;
    gap: 15.500px;
    margin-left: 18px;
    font-size: 14.700px;
}

.window-title {
    margin-left: 40px;
    width: 921px;
    white-space: nowrap;
    overflow: hidden;
    color: #8d9093;
    font-size: 14.600px;
}

.window-btns {
    margin-left: auto;
    display: flex;
    gap: 45px;
    padding-right: 22px;
}

.win-ic {
    width: 14px;
    height: 14px;
}

/* nav bar */
.navbar {
    flex: none;
    height: 36px;
    display: flex;
    align-items: center;
    border-bottom: 1px solid #323232;
    padding: 0 7px 0 12px;
}

.crumbs {
    display: flex;
    align-items: center;
    gap: 5px;
}

.crumb-sep {
    width: 7px;
    height: 22px;
}

.actions {
    margin-left: auto;
    display: flex;
    align-items: center;
}

.combo {
    height: 27px;
    display: flex;
    align-items: center;
    gap: 7px;
    border: 1px solid #5e6060;
    border-radius: 4px;
    padding: 0 8px;
}

.combo-app {
    width: 90px;
    margin-left: 15px;
    padding-left: 11px;
}

.combo-device {
    width: 157px;
    margin-left: 9px;
}

.tool-icons {
    display: flex;
    align-items: center;
    margin-left: 6px;
}

.tb {
    width: 32.500px;
    display: flex;
    justify-content: center;
}

.tool-icons .vsep {
    margin: 0 3.600px;
}

.avatar {
    width: 21px;
    height: 30px;
    margin-left: 6px;
}

/* main area */
.workspace {
    flex: 1;
    display: flex;
    min-height: 0;
}

.strip-left {
    flex: none;
    width: 29px;
    border-right: 1px solid #323232;
}

.strip-item {
    display: flex;
    flex-direction: column;
    align-items: center;
    justify-content: flex-end;
    gap: 6px;
    font-size: 12.500px;
    letter-spacing: .2px;
}

.vtext {
    writing-mode: vertical-rl;
    transform: rotate(180deg);
    white-space: nowrap;
}

.item-res { height: 173px; padding-bottom: 17px; }
.item-project { height: 107px; padding-bottom: 13px; background-color: #2d2f31; color: #d0d0d0; }
.item-fav { height: 194px; }
.item-variants { height: 136px; }
.item-struct { height: 123px; }
.item-captures { height: 153px; }

.project-panel {
    flex: none;
    width: 465px;
    border-right: 1px solid #323232;
}

.panel-head {
    height: 34px;
    display: flex;
    align-items: center;
    border-bottom: 1px solid #323232;
    padding: 2px 9px 0 13px;
}

.head-title {
    margin: 0 12px 0 8px;
}

.head-tools {
    margin-left: auto;
    display: flex;
    align-items: center;
    gap: 13px;
}

.head-min {
    margin-left: 3px;
}

.tree {
    padding-top: 2px;
}

.node {
    height: 26.200px;
    display: flex;
    align-items: center;
    padding-left: 3px;
    padding-top: 2px;
    white-space: nowrap;
}

.node b {
    font-weight: 700;
}

.node em, .cnode em {
    font-style: normal;
    color: #7f8285;
    margin-left: 6px;
}

.lv1 { padding-left: 25.500px; }
.lv2 { padding-left: 48px; }
.lv3 { padding-left: 70.500px; }

.arrow {
    flex: none;
    width: 11px;
    height: 11px;
    margin-right: 12px;
}

.ic {
    width: 18px;
    height: 16px;
    margin-right: 5px;
}

.ic.cls {
    height: 18px;
}

.selected {
    background-color: #0d293e;
}

.testrow {
    background-color: #49544a;
}

/* editor */
.editor {
    flex: 1;
    min-width: 0;
    display: flex;
    flex-direction: column;
}

.tabs {
    flex: none;
    height: 34px;
    display: flex;
    border-bottom: 1px solid #323232;
}

.tab {
    display: flex;
    align-items: center;
    gap: 5px;
    padding: 2px 10px 0 11px;
}

.tab span:last-of-type {
    margin-right: 7px;
}

.tab .cls {
    margin-right: 0;
}

.tab.active {
    width: 177px;
    background-color: #44474a;
    border-bottom: 3px solid #4a88c7;
    padding-top: 4px;
}

.viewmodes {
    flex: none;
    height: 36px;
    display: flex;
    justify-content: flex-end;
    align-items: center;
    border-bottom: 1px solid #323232;
    padding-right: 5px;
}

.vm {
    width: 27px;
    height: 27px;
    margin-left: 6px;
    display: flex;
    align-items: center;
    justify-content: center;
}

.vm-on {
    background-color: #575b5d;
    border-radius: 3px;
}

.design {
    flex: 1;
    min-height: 0;
    display: flex;
    border-bottom: 1px solid #2b2d2f;
}

.left-col {
    flex: none;
    width: 282px;
    display: flex;
    flex-direction: column;
    border-right: 1px solid #2b2d2f;
    background-color: #313335;
}

.sub-head {
    flex: none;
    height: 36px;
    display: flex;
    align-items: center;
    justify-content: space-between;
    padding: 0 9px 0 6px;
    background-color: #3c3f41;
    border-bottom: 1px solid #2b2d2f;
    font-size: 12.500px;
    letter-spacing: .3px;
}

.sub-head > span {
    padding-top: 2px;
}

.sub-tools {
    display: flex;
    align-items: center;
    gap: 16px;
}

.palette {
    height: 408px;
    border-bottom: 1px solid #2b2d2f;
    display: flex;
    flex-direction: column;
}

.palette-body {
    flex: 1;
    display: flex;
    padding-top: 1px;
}

.cats {
    width: 93px;
    font-size: 12.500px;
    letter-spacing: .3px;
}

.cats li {
    height: 31.300px;
    line-height: 29px;
    padding: 2px 0 0 14px;
}

.cats li.on, .widgets li.on {
    background-color: #0d293e;
}

.widgets {
    flex: 1;
    margin-left: 2px;
    padding-top: 1px;
}

.widgets li {
    height: 26.300px;
    display: flex;
    align-items: center;
    padding: 2px 0 0 13px;
}

.w-ic {
    width: 18px;
    height: 14px;
    margin-right: 6px;
}

.ab {
    width: 24px;
    color: #9aa7b0;
}

.dl {
    width: 14px;
    height: 16px;
    margin-left: auto;
    margin-right: 7px;
}

.comp-tree {
    flex: 1;
    min-height: 0;
    position: relative;
    overflow: hidden;
    display: flex;
    flex-direction: column;
}

.comp-tree .sub-head {
    height: 34px;
}

.comp-list {
    padding-top: 2px;
}

.cnode {
    height: 26.200px;
    display: flex;
    align-items: center;
    padding-left: 11px;
    padding-right: 8px;
    white-space: nowrap;
}

.c-root { padding-left: 9px; }
.c1 { padding-left: 33.500px; }
.c2 { padding-left: 56px; }

.c-ar {
    flex: none;
    width: 11px;
    height: 11px;
    margin-right: 9px;
}

.c-ic {
    flex: none;
    width: 18px;
    height: 16px;
    margin-right: 6px;
}

.edit-ic {
    color: #9aa7b0;
    font-size: 10px;
    font-weight: 700;
    line-height: 12px;
    border-bottom: 2px solid #9aa7b0;
}

.cnode em {
    margin-left: 11px;
    font-size: 12.500px;
    letter-spacing: .5px;
}

.warn {
    width: 17px;
    height: 16px;
    margin-left: auto;
}

.scrollbar {
    position: absolute;
    top: 36px;
    right: 2px;
    width: 10px;
    height: 172px;
    background-color: rgba(150, 155, 160, .28);
}

.center-col {
    flex: 1;
    min-width: 0;
    display: flex;
    flex-direction: column;
}

.dt-bar {
    flex: none;
    height: 36px;
    display: flex;
    align-items: center;
    gap: 9px;
    padding: 0 8px;
    border-bottom: 1px solid #2b2d2f;
    font-size: 14.500px;
}

.dt-label {
    margin-left: -5px;
    color: #aaaaaa;
}

.ic-chev {
    margin-left: -4px;
}

.m-a { margin-right: 1px; }
.m-b { margin-left: 8px; }
.m-c { margin-left: 9px; }
.m-t { margin-left: 12px; }
.m-d { margin-left: 5px; }

.warn-top {
    margin-left: auto;
}

.bar2 {
    height: 37px;
    gap: 12px;
    padding-left: 10px;
}

.bar2 .vsep {
    margin: 0 -2px;
}

.zero-dp {
    width: 44px;
    text-align: center;
    border-bottom: 1px solid #8c8f92;
    line-height: 20px;
    margin: 1px -4px 0 -2px;
    color: #9a9da0;
    font-size: 14px;
}

.surface {
    flex: 1;
    min-height: 0;
    position: relative;
    display: flex;
    align-items: flex-start;
    gap: 12px;
    padding: 88px 0 0 67px;
    background-color: #2d2f31;
}

/* phone preview */
.phone {
    flex: none;
    width: 310px;
    height: 552px;
    background-color: #fafafa;
    padding-left: 3px;
    overflow: hidden;
}

.edit {
    height: 28px;
    display: flex;
    align-items: flex-end;
    padding: 0 0 1px;
    color: #aaaaaa;
    border-bottom: 1px solid #808080;
    font-size: 13.500px;
}

.e2 { height: 34px; }

.result {
    height: 32px;
    color: #ff1010;
}

.btn-row {
    display: flex;
    gap: 5px;
    margin-top: 7px;
}

.r1 { margin-top: 10px; }

.btn-row button {
    flex: none;
    width: 61.500px;
    height: 29px;
}

button {
    border: none;
    padding: 0;
    border-radius: 2px;
    background-color: #d6d7d7;
    color: #222222;
    font-family: Roboto, "Noto Sans CJK KR", sans-serif;
    font-size: 10px;
    font-weight: 500;
}

/* wider than the phone, the screen clips them */
.wide {
    display: block;
    width: 324px;
    height: 27.500px;
    margin-top: 8.500px;
    font-size: 10px;
    font-weight: 400;
}

.w1 { margin-top: 8px; }

/* blueprint */
.blueprint {
    flex: none;
    position: relative;
    width: 312px;
    height: 553px;
    margin-top: -1px;
    background-color: #38748a;
    border: 1px dashed #7fd4ea;
    color: #8ccbdc;
    font-size: 10px;
}

.bp-row {
    position: relative;
    display: flex;
    align-items: center;
    justify-content: center;
    padding: 2px 0 0 19px;
    background-color: #5193a8;
    border-bottom: 2px solid #78c6da;
}

.bp-row::after {
    content: "";
    position: absolute;
    left: 100%;
    bottom: -2px;
    width: 21px;
    border-top: 1px dashed #7fd4ea;
}

.b34 { height: 34px; }
.b36 { height: 36px; }
.b37 { height: 37px; }

.cells {
    justify-content: flex-start;
    padding: 0;
}

.cells span {
    flex: none;
    width: 66.500px;
    height: 100%;
    display: flex;
    align-items: center;
    justify-content: center;
    padding-top: 2px;
    border-right: 2px solid #78c6da;
}

.cells span:last-child {
    width: 46px;
    border-right: none;
    padding-left: 6px;
}

.bp-guide {
    position: absolute;
    top: -1px;
    left: calc(100% + 21px);
    height: 321px;
    border-left: 1px dashed #7fd4ea;
}

.resize {
    position: absolute;
    left: 381px;
    top: 645px;
    width: 22px;
    height: 22px;
}

.zoom-box {
    position: absolute;
    right: 17px;
    width: 35px;
    background-color: #3c3f41;
    border-radius: 3px;
}

.hand {
    top: 529px;
    height: 37px;
    display: flex;
    align-items: center;
    justify-content: center;
}

.zooms {
    top: 571px;
    height: 135px;
    display: flex;
    flex-direction: column;
    align-items: center;
    justify-content: space-around;
    padding-bottom: 5px;
    color: #bbbbbb;
    font-size: 12px;
}

.zooms .plus {
    font-size: 22px;
    line-height: 22px;
    font-weight: 700;
}

.zooms .minus {
    font-size: 20px;
    line-height: 20px;
    color: #5e6062;
    font-weight: 700;
}

/* attributes */
.attrs {
    flex: none;
    width: 350px;
    display: flex;
    flex-direction: column;
    border-left: 1px solid #2b2d2f;
    background-color: #313436;
}

.attrs .sub-head {
    padding-right: 8px;
}

.attrs-msg {
    text-align: center;
    padding: 322px 0 0 28px;
    font-size: 14.500px;
    line-height: 21px;
}

.attrs-msg p {
    margin: 0 0 21px;
}

.path-bar {
    flex: none;
    height: 29px;
    display: flex;
    align-items: center;
    padding-left: 87px;
    background-color: #313335;
    font-size: 14.300px;
}

.path-sep {
    font-style: normal;
    margin: 0 14px;
    color: #7c7f82;
}

.strip-right {
    flex: none;
    width: 28px;
    border-left: 1px solid #323232;
    display: flex;
    flex-direction: column;
    justify-content: space-between;
}

.r-item {
    display: flex;
    flex-direction: column;
    align-items: center;
    gap: 5px;
    font-size: 12.300px;
    letter-spacing: .2px;
}

.r-gradle { padding-top: 12px; }
.r-device { padding-bottom: 24px; }

.vtext-r {
    writing-mode: vertical-rl;
    white-space: nowrap;
}

/* bottom */
.toolbar-bottom {
    flex: none;
    height: 28px;
    display: flex;
    align-items: center;
    border-top: 1px solid #2b2d2f;
    border-bottom: 1px solid #323232;
    padding: 1px 0 0 42px;
    font-size: 12.500px;
    letter-spacing: .3px;
}

.bt {
    display: flex;
    align-items: center;
    gap: 5px;
    margin-right: 24px;
}

.t-build { margin-right: 25px; }
.t-run { margin-left: 3px; letter-spacing: .8px; }
.t-todo { margin-left: 5px; letter-spacing: .7px; }

.event-log {
    margin-left: auto;
    margin-right: 39px;
}

.badge {
    width: 18px;
    height: 17px;
    line-height: 17px;
    text-align: center;
    border-radius: 9px 9px 0 9px;
    background-color: #c94f4f;
    color: #ffffff;
    font-size: 10.500px;
    letter-spacing: 0;
}

.status {
    flex: none;
    height: 23px;
    display: flex;
    align-items: center;
    padding: 2px 0 0 8px;
    gap: 11px;
    font-size: 14.600px;
}

.status-right {
    margin-left: auto;
    display: flex;
    align-items: center;
    gap: 17px;
    padding-right: 9px;
    font-size: 14.300px;
}

.dim {
    color: #707375;
}
```
